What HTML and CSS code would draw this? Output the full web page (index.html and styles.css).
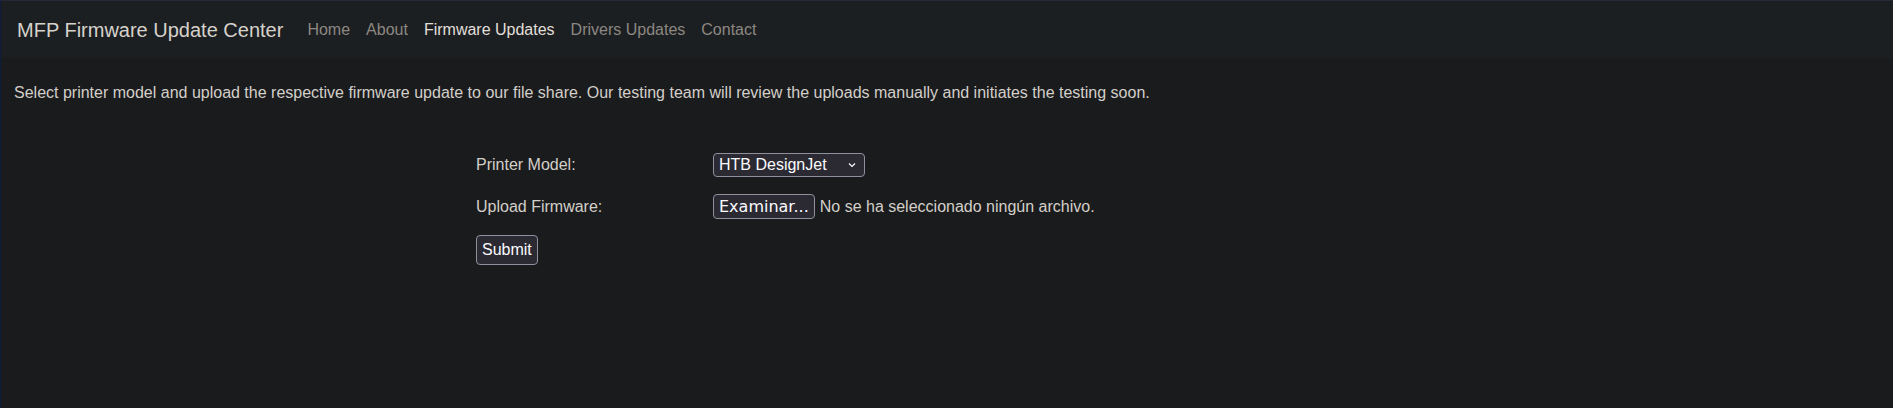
FILE: index.html
```html
<!DOCTYPE html>
<html lang="en">
<head>
<meta charset="utf-8">
<title>MFP Firmware Update Center</title>
<link rel="stylesheet" href="styles.css">
</head>
<body>
<div class="frame">
  <nav class="navbar">
    <a class="brand" href="#">MFP Firmware Update Center</a>
    <ul class="nav">
      <li><a class="nav-link" href="#">Home</a></li>
      <li><a class="nav-link" href="#">About</a></li>
      <li><a class="nav-link active" href="#">Firmware Updates</a></li>
      <li><a class="nav-link" href="#">Drivers Updates</a></li>
      <li><a class="nav-link" href="#">Contact</a></li>
    </ul>
  </nav>
  <main class="content">
    <p class="intro">Select printer model and upload the respective firmware update to our file share. Our testing team will review the uploads manually and initiates the testing soon.</p>
    <form class="upload-form">
      <div class="row row-model">
        <span class="label">Printer Model:</span>
        <div class="select" role="combobox" aria-label="Printer Model">
          <span class="select-text">HTB DesignJet</span>
          <svg class="chevron" width="8" height="6" viewBox="0 0 8 6"><path d="M1 1.5 L4 4.5 L7 1.5" fill="none" stroke="#fbfbfe" stroke-width="1.2"/></svg>
        </div>
      </div>
      <div class="row row-file">
        <span class="label">Upload Firmware:</span>
        <span class="file">
          <span class="file-btn">Examinar...</span>
          <span class="file-name">No se ha seleccionado ningún archivo.</span>
        </span>
      </div>
      <div class="row row-submit">
        <button type="button" class="btn">Submit</button>
      </div>
    </form>
  </main>
</div>
</body>
</html>
```
FILE: styles.css
```css
html, body {
  margin: 0;
  padding: 0;
  height: 100%;
}
body {
  background: #1a1b1d;
  font-family: "Liberation Sans", Arial, sans-serif;
  color: #d3cfc9;
}
.frame {
  min-height: 100%;
  box-sizing: border-box;
  border-left: 1px solid #0f1d3d;
  border-top: 1px solid #262a38;
  background: #1a1b1d;
}
.navbar {
  display: flex;
  align-items: center;
  height: 57px;
  padding: 0 0 0 16px;
  background: #1c1f21;
}
.brand {
  font-size: 20px;
  color: #d6d2cc;
  text-decoration: none;
  margin-right: 16px;
  line-height: 30px;
}
.nav {
  display: flex;
  list-style: none;
  margin: 0;
  padding: 0;
}
.nav-link {
  display: block;
  padding: 8px;
  font-size: 16px;
  line-height: 24px;
  color: #8c8782;
  text-decoration: none;
}
.nav-link.active {
  color: #e2dfda;
}
.content {
  padding: 23px 13px 0 13px;
}
.intro {
  margin: 0;
  font-size: 16px;
  line-height: 24px;
  color: #d3cfc9;
}
.upload-form {
  margin: 48px 0 0 462px;
  display: flex;
  flex-direction: column;
}
.row {
  display: flex;
  align-items: center;
  font-size: 16px;
}
.row-model {
  height: 24px;
  margin-bottom: 17px;
}
.row-file {
  height: 25px;
  margin-bottom: 16px;
}
.row-submit {
  height: 30px;
}
.label {
  width: 237px;
  color: #d3cfc9;
}
.select {
  box-sizing: border-box;
  width: 152px;
  height: 24px;
  display: flex;
  align-items: center;
  justify-content: space-between;
  padding: 0 8px 0 5px;
  background: #2b2a33;
  color: #fbfbfe;
  border: 1px solid #8f8f9d;
  border-radius: 4px;
  font-size: 16px;
  line-height: 18px;
}
.chevron {
  flex: none;
}
.file {
  display: flex;
  align-items: center;
}
.file-btn {
  box-sizing: border-box;
  height: 25px;
  padding: 0 5px;
  display: flex;
  align-items: center;
  justify-content: center;
  background: #2b2a33;
  color: #fbfbfe;
  border: 1px solid #8f8f9d;
  border-radius: 4px;
  font: 16px "DejaVu Sans", sans-serif;
}
.file-name {
  margin-left: 5px;
  color: #d3cfc9;
}
.btn {
  box-sizing: border-box;
  height: 30px;
  margin: 0;
  padding: 0 5px;
  background: #2b2a33;
  color: #fbfbfe;
  border: 1px solid #8f8f9d;
  border-radius: 4px;
  font: 16px "Liberation Sans", Arial, sans-serif;
}
```
